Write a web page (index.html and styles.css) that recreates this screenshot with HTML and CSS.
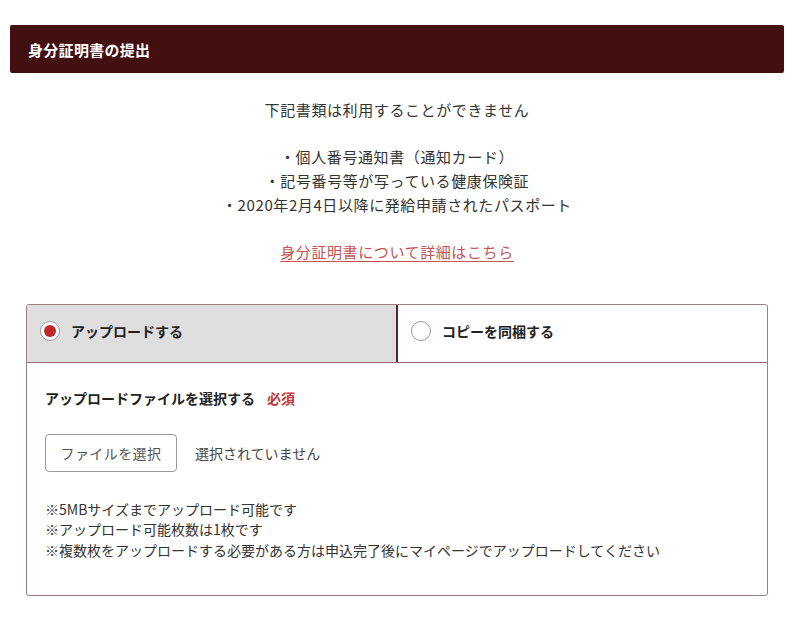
FILE: index.html
```html
<!DOCTYPE html>
<html lang="ja">
<head>
<meta charset="utf-8">
<link rel="stylesheet" href="styles.css">
</head>
<body>
<div class="page">
  <h2 class="section-title">身分証明書の提出</h2>
  <p class="notice">
    下記書類は利用することができません<br><br>
    ・個人番号通知書（通知カード）<br>
    ・記号番号等が写っている健康保険証<br>
    ・2020年2月4日以降に発給申請されたパスポート<br><br>
    <a class="detail-link" href="#">身分証明書について詳細はこちら</a>
  </p>
  <div class="upload-box">
    <div class="tabs">
      <label class="tab tab-active"><span class="radio radio-on"></span><span class="tab-label">アップロードする</span></label>
      <label class="tab"><span class="radio"></span><span class="tab-label">コピーを同梱する</span></label>
    </div>
    <div class="panel">
      <div class="field-title">アップロードファイルを選択する<span class="required">必須</span></div>
      <div class="file-row">
        <span class="file-btn">ファイルを選択</span>
        <span class="file-status">選択されていません</span>
      </div>
      <ul class="notes">
        <li>※5MBサイズまでアップロード可能です</li>
        <li>※アップロード可能枚数は1枚です</li>
        <li>※複数枚をアップロードする必要がある方は申込完了後にマイページでアップロードしてください</li>
      </ul>
    </div>
  </div>
</div>
</body>
</html>
```
FILE: styles.css
```css
* { box-sizing: border-box; }
html, body { margin: 0; padding: 0; background: #fff; }
body {
  font-family: "Noto Sans CJK JP", "Noto Sans", sans-serif;
  color: #333;
}
.page {
  width: 774px;
  margin: 0 0 0 10px;
  padding-top: 25px;
}
.section-title {
  margin: 0;
  height: 48px;
  display: flex;
  align-items: center;
  padding-left: 18px;
  background: #431012;
  color: #fff;
  font-size: 15px;
  font-weight: bold;
  border-radius: 2px;
  letter-spacing: 0.02em;
}
.notice {
  margin: 25px 0 0;
  text-align: center;
  font-size: 15px;
  line-height: 23.7px;
  letter-spacing: 0.04em;
  color: #333;
}
.detail-link {
  color: #c65457;
  text-decoration: underline;
  text-underline-offset: 3px;
}
.upload-box {
  margin: 40px 16px 0;
  border: 1px solid #9b7f80;
  border-radius: 3px;
  height: 292px;
  overflow: hidden;
}
.tabs {
  display: flex;
  height: 58px;
  border-bottom: 1px solid #8f6f70;
}
.tab {
  flex: 1;
  display: flex;
  align-items: center;
  padding-left: 13px;
  padding-bottom: 5px;
  gap: 11px;
  font-size: 14px;
  font-weight: bold;
  color: #222;
}
.tab-active {
  background: #dedede;
  border-right: 2px solid #5c2626;
}
.radio {
  width: 20px;
  height: 20px;
  border-radius: 50%;
  border: 1px solid #9a9a9a;
  background: #fff;
  display: flex;
  align-items: center;
  justify-content: center;
}
.radio-on::after {
  content: "";
  width: 12px;
  height: 12px;
  border-radius: 50%;
  background: #c0262b;
}
.panel {
  padding: 25px 18px 0;
}
.field-title {
  font-size: 14px;
  font-weight: bold;
  color: #222;
  line-height: 20px;
}
.required {
  color: #c0393b;
  margin-left: 12px;
}
.file-row {
  display: flex;
  align-items: center;
  margin-top: 26px;
  gap: 18px;
}
.file-btn {
  display: inline-flex;
  align-items: center;
  justify-content: center;
  width: 132px;
  height: 38px;
  border: 1px solid #999;
  border-radius: 4px;
  font-size: 14px;
  color: #555;
  background: #fff;
  letter-spacing: 0.03em;
}
.file-status {
  font-size: 14px;
  color: #444;
}
.notes {
  list-style: none;
  margin: 27px 0 0;
  padding: 0;
  font-size: 14px;
  line-height: 20.5px;
  color: #333;
}
```
